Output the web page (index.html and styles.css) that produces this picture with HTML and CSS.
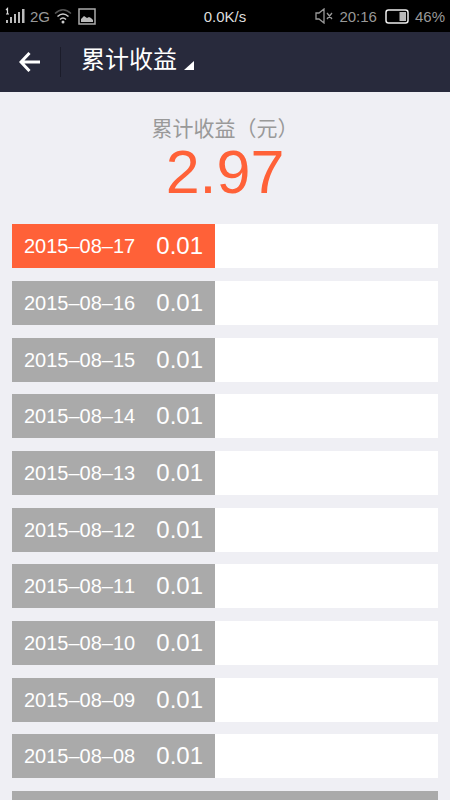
FILE: index.html
```html
<!DOCTYPE html>
<html lang="zh-CN">
<head>
<meta charset="utf-8">
<meta name="viewport" content="width=device-width, initial-scale=1">
<title>累计收益</title>
<link rel="stylesheet" href="styles.css">
</head>
<body>
<div class="status">
  <div class="status-left">
    <svg width="20" height="18" viewBox="0 0 20 18" aria-hidden="true"><path d="M1 3l1.500-1.500V7M1 7h3" fill="none" stroke="#ddd" stroke-width="1.200"/><path d="M1 13h2v3H1zM5 10h2v6H5zM9 7h2v9H9zM13 5h2v11h-2zM17 2h2.500v14H17z" fill="#bbb"/></svg>
    <span>2G</span>
    <svg width="18" height="16" viewBox="0 0 18 16" aria-hidden="true"><g fill="none" stroke-width="1.500"><path d="M1 5.500Q9-2 17 5.500" stroke="#555"/><path d="M3.500 8.500Q9 3.500 14.500 8.500M6 11.500Q9 8.500 12 11.500" stroke="#ccc"/></g><circle cx="9" cy="14" r="1.500" fill="#ccc"/></svg>
    <svg class="picture" width="18" height="17" viewBox="0 0 18 17" aria-hidden="true"><path d="M1 1h16v15H1z" fill="none" stroke="#aaa" stroke-width="1.500"/><path d="M3 14v-3l3-3 3 2 2-1 2 1 2 2v2z" fill="#bbb"/></svg>
  </div>
  <div class="speed">0.0K/s</div>
  <div class="status-right">
    <svg width="18" height="16" viewBox="0 0 18 16" aria-hidden="true"><path d="M1 5h3l5-4v14l-5-4H1zM12 5l5 6M17 5l-5 6" fill="none" stroke="#999" stroke-width="1.300"/></svg>
    <span>20:16</span>
    <svg class="battery" width="24" height="15" viewBox="0 0 24 15" aria-hidden="true"><rect x="1" y="1" width="22" height="13" rx="2.500" fill="none" stroke="#eee" stroke-width="1.500"/><path d="M14.500 3H21v9h-6.500z" fill="#bbb"/></svg>
    <span>46%</span>
  </div>
</div>
<header class="bar">
  <button class="back" type="button" aria-label="返回">
    <svg width="22" height="20" viewBox="0 0 22 20" aria-hidden="true"><path d="M10.500 1L2 10l8.500 9M2 10h19" fill="none" stroke="#fff" stroke-width="3"/></svg>
  </button>
  <button class="title" type="button">累计收益<svg width="10" height="9" viewBox="0 0 10 9" aria-hidden="true"><path d="M10 0v9H0z" fill="#fff"/></svg></button>
</header>
<main>
  <section class="total">
    <h1>累计收益（元）</h1>
    <p>2.97</p>
  </section>
  <ul class="days">
    <li class="today"><div><time>2015–08–17</time><b>0.01</b></div></li>
    <li><div><time>2015–08–16</time><b>0.01</b></div></li>
    <li><div><time>2015–08–15</time><b>0.01</b></div></li>
    <li><div><time>2015–08–14</time><b>0.01</b></div></li>
    <li><div><time>2015–08–13</time><b>0.01</b></div></li>
    <li><div><time>2015–08–12</time><b>0.01</b></div></li>
    <li><div><time>2015–08–11</time><b>0.01</b></div></li>
    <li><div><time>2015–08–10</time><b>0.01</b></div></li>
    <li><div><time>2015–08–09</time><b>0.01</b></div></li>
    <li><div><time>2015–08–08</time><b>0.01</b></div></li>
    <li class="full"><div></div></li>
  </ul>
</main>
</body>
</html>
```
FILE: styles.css
```css
* { box-sizing: border-box; margin: 0; padding: 0; }
body {
  display: flex;
  flex-direction: column;
  height: 100vh;
  overflow: hidden;
  background: #efeff4;
  font-family: "Liberation Sans", "Noto Sans CJK SC", sans-serif;
  font-kerning: none;
}
svg { display: block; flex: none; }
button { border: 0; background: none; color: inherit; font: inherit; }
.status {
  flex: none;
  display: grid;
  grid-template-columns: 1fr auto 1fr;
  align-items: center;
  height: 32px;
  padding: 0 5px;
  background: #000;
  color: #999;
  font-size: 15px;
}
.status-left, .status-right { display: flex; align-items: center; }
.status-left { gap: 4px; }
.status-left span { padding-left: 1px; }
.picture { margin-left: 2px; }
.status-right { justify-content: flex-end; gap: 6px; }
.battery { margin-left: 2px; }
.speed { color: #ddd; }
.bar {
  flex: none;
  display: flex;
  align-items: center;
  height: 60px;
  background: #282a3c;
  color: #fff;
}
.back { width: 61px; height: 30px; padding-left: 19px; border-right: 1px solid #1b1c2a; }
.title {
  display: flex;
  align-items: flex-end;
  gap: 7px;
  padding: 0 20px 4px;
  font-size: 24px;
  line-height: 36px;
}
.title svg { margin-bottom: 8px; }
main { flex: 1; min-height: 0; }
.total { padding-top: 24px; height: 132px; text-align: center; }
.total h1 { color: #999; font-size: 21px; font-weight: 400; line-height: 26px; }
.total p { color: #ff6138; font-size: 61px; line-height: 60px; }
.days { list-style: none; padding: 0 12px; }
.days li { height: 44px; margin-bottom: 13px; background: #fff; }
.days li:nth-child(3n) { margin-bottom: 12px; }
.days div {
  display: flex;
  align-items: center;
  justify-content: space-between;
  width: 203px;
  height: 100%;
  padding: 0 12px;
  background: #aaa;
  color: #fff;
}
.days .today div { background: #ff6138; }
.days .full div { width: 100%; }
.days time { font-size: 20px; }
.days b { font-size: 24px; font-weight: 400; }
```
